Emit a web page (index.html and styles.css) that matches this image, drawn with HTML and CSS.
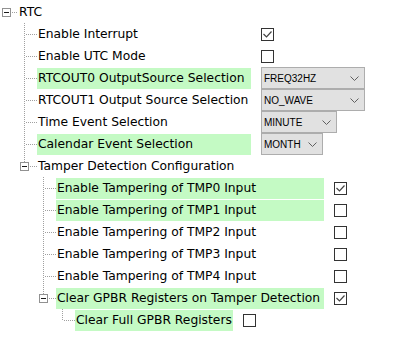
FILE: index.html
```html
<!DOCTYPE html>
<html lang="en">
<head>
    <meta charset="UTF-8">
    <meta name="viewport" content="width=device-width, initial-scale=1.0">
    <title>RTC Configuration</title>
    <link rel="stylesheet" href="styles.css">
</head>
<body>
    <div class="tree">
        <div class="row">
            <span class="expander root"><span class="box"></span></span>
            <span class="label">RTC</span>
        </div>

        <div class="row">
            <span class="indent"></span>
            <span class="branch"></span>
            <span class="label lv1">Enable Interrupt</span>
            <span class="check checked"><svg width="11" height="11" viewBox="0 0 11 11"><polyline points="1.5,5 4.5,8 9.5,2.5" /></svg></span>
        </div>
        <div class="row">
            <span class="indent"></span>
            <span class="branch"></span>
            <span class="label lv1">Enable UTC Mode</span>
            <span class="check"></span>
        </div>
        <div class="row">
            <span class="indent"></span>
            <span class="branch"></span>
            <span class="label lv1 hl">RTCOUT0 OutputSource Selection</span>
            <div class="combo combo-wide"><span>FREQ32HZ</span><svg width="9" height="5" viewBox="0 0 9 5"><polyline points="0.5,0.5 4.5,4.5 8.5,0.5" /></svg></div>
        </div>
        <div class="row">
            <span class="indent"></span>
            <span class="branch"></span>
            <span class="label lv1">RTCOUT1 Output Source Selection</span>
            <div class="combo combo-wide"><span>NO_WAVE</span><svg width="9" height="5" viewBox="0 0 9 5"><polyline points="0.5,0.5 4.5,4.5 8.5,0.5" /></svg></div>
        </div>
        <div class="row">
            <span class="indent"></span>
            <span class="branch"></span>
            <span class="label lv1">Time Event Selection</span>
            <div class="combo combo-mid"><span>MINUTE</span><svg width="9" height="5" viewBox="0 0 9 5"><polyline points="0.5,0.5 4.5,4.5 8.5,0.5" /></svg></div>
        </div>
        <div class="row">
            <span class="indent"></span>
            <span class="branch"></span>
            <span class="label lv1 hl">Calendar Event Selection</span>
            <div class="combo combo-small"><span>MONTH</span><svg width="9" height="5" viewBox="0 0 9 5"><polyline points="0.5,0.5 4.5,4.5 8.5,0.5" /></svg></div>
        </div>
        <div class="row">
            <span class="indent"></span>
            <span class="expander"><span class="box"></span></span>
            <span class="label">Tamper Detection Configuration</span>
        </div>

        <div class="row">
            <span class="indent"></span>
            <span class="indent"></span>
            <span class="branch"></span>
            <span class="label lv2 hl">Enable Tampering of TMP0 Input</span>
            <span class="check checked"><svg width="11" height="11" viewBox="0 0 11 11"><polyline points="1.5,5 4.5,8 9.5,2.5" /></svg></span>
        </div>
        <div class="row">
            <span class="indent"></span>
            <span class="indent"></span>
            <span class="branch"></span>
            <span class="label lv2 hl">Enable Tampering of TMP1 Input</span>
            <span class="check"></span>
        </div>
        <div class="row">
            <span class="indent"></span>
            <span class="indent"></span>
            <span class="branch"></span>
            <span class="label lv2">Enable Tampering of TMP2 Input</span>
            <span class="check"></span>
        </div>
        <div class="row">
            <span class="indent"></span>
            <span class="indent"></span>
            <span class="branch"></span>
            <span class="label lv2">Enable Tampering of TMP3 Input</span>
            <span class="check"></span>
        </div>
        <div class="row">
            <span class="indent"></span>
            <span class="indent"></span>
            <span class="branch"></span>
            <span class="label lv2">Enable Tampering of TMP4 Input</span>
            <span class="check"></span>
        </div>
        <div class="row">
            <span class="indent"></span>
            <span class="indent"></span>
            <span class="expander"><span class="box"></span></span>
            <span class="label lv2 hl">Clear GPBR Registers on Tamper Detection</span>
            <span class="check checked"><svg width="11" height="11" viewBox="0 0 11 11"><polyline points="1.5,5 4.5,8 9.5,2.5" /></svg></span>
        </div>

        <div class="row">
            <span class="indent"></span>
            <span class="indent"></span>
            <span class="indent"></span>
            <span class="branch last"></span>
            <span class="label lv3 hl">Clear Full GPBR Registers</span>
            <span class="check"></span>
        </div>
    </div>
</body>
</html>
```

FILE: styles.css
```css
* {
    margin: 0;
    padding: 0;
    box-sizing: border-box;
}

body {
    background-color: white;
    font-family: "DejaVu Sans", Verdana, sans-serif;
    font-size: 12.3px;
    color: #000;
    padding-top: 1px;
}

.row {
    display: flex;
    align-items: center;
    height: 22px;
}

/* tree lines */
.indent {
    flex: none;
    width: 19px;
    height: 22px;
}

.branch {
    flex: none;
    width: 18px;
    height: 22px;
    background:
        repeating-linear-gradient(to bottom, #a0a0a0 0 1px, transparent 1px 2px) 5px 0 / 1px 22px no-repeat,
        repeating-linear-gradient(to right, #a0a0a0 0 1px, transparent 1px 2px) 7px 11px / 11px 1px no-repeat;
}

.branch.last {
    background:
        repeating-linear-gradient(to bottom, #a0a0a0 0 1px, transparent 1px 2px) 5px 0 / 1px 12px no-repeat,
        repeating-linear-gradient(to right, #a0a0a0 0 1px, transparent 1px 2px) 7px 11px / 11px 1px no-repeat;
}

.expander {
    flex: none;
    width: 18px;
    height: 22px;
    display: flex;
    align-items: flex-start;
    background:
        repeating-linear-gradient(to bottom, #a0a0a0 0 1px, transparent 1px 2px) 5px 0 / 1px 7px no-repeat,
        repeating-linear-gradient(to right, #a0a0a0 0 1px, transparent 1px 2px) 11px 11px / 7px 1px no-repeat;
}

.expander.root {
    background:
        repeating-linear-gradient(to right, #a0a0a0 0 1px, transparent 1px 2px) 12px 11px / 6px 1px no-repeat;
}

.box {
    width: 9px;
    height: 9px;
    margin: 7px 0 0 1px;
    border: 1px solid #919191;
    background-color: white;
}

.expander.root .box {
    margin-left: 2px;
}

.box::before {
    content: "";
    display: block;
    width: 5px;
    height: 1px;
    margin: 3px 0 0 1px;
    background-color: #1a1a1a;
}

/* labels */
.label {
    flex: none;
    height: 21px;
    margin-top: 1px;
    line-height: 21px;
    padding: 0 1px;
    white-space: nowrap;
}

.label.hl {
    background-color: #c4fac4;
}

.lv1 {
    width: 214px;
    margin-right: 10px;
}

.lv2 {
    width: 268px;
    margin-right: 10px;
}

.lv3 {
    width: 158px;
    margin-right: 10px;
}

/* controls */
.check {
    flex: none;
    width: 13px;
    height: 13px;
    border: 1px solid #333;
    background-color: white;
}

.check svg {
    display: block;
}

.check polyline {
    fill: none;
    stroke: #444;
    stroke-width: 1.2;
}

.combo {
    flex: none;
    height: 22px;
    display: flex;
    align-items: center;
    justify-content: space-between;
    padding: 0 5px 0 2px;
    border: 1px solid #adadad;
    background-color: #e1e1e1;
    font-family: "Liberation Sans", Arial, sans-serif;
    font-size: 10px;
    color: #000;
}

.combo polyline {
    fill: none;
    stroke: #606060;
    stroke-width: 1;
}

.combo-wide {
    width: 104px;
}

.combo-mid {
    width: 76px;
}

.combo-small {
    width: 62px;
}
```
